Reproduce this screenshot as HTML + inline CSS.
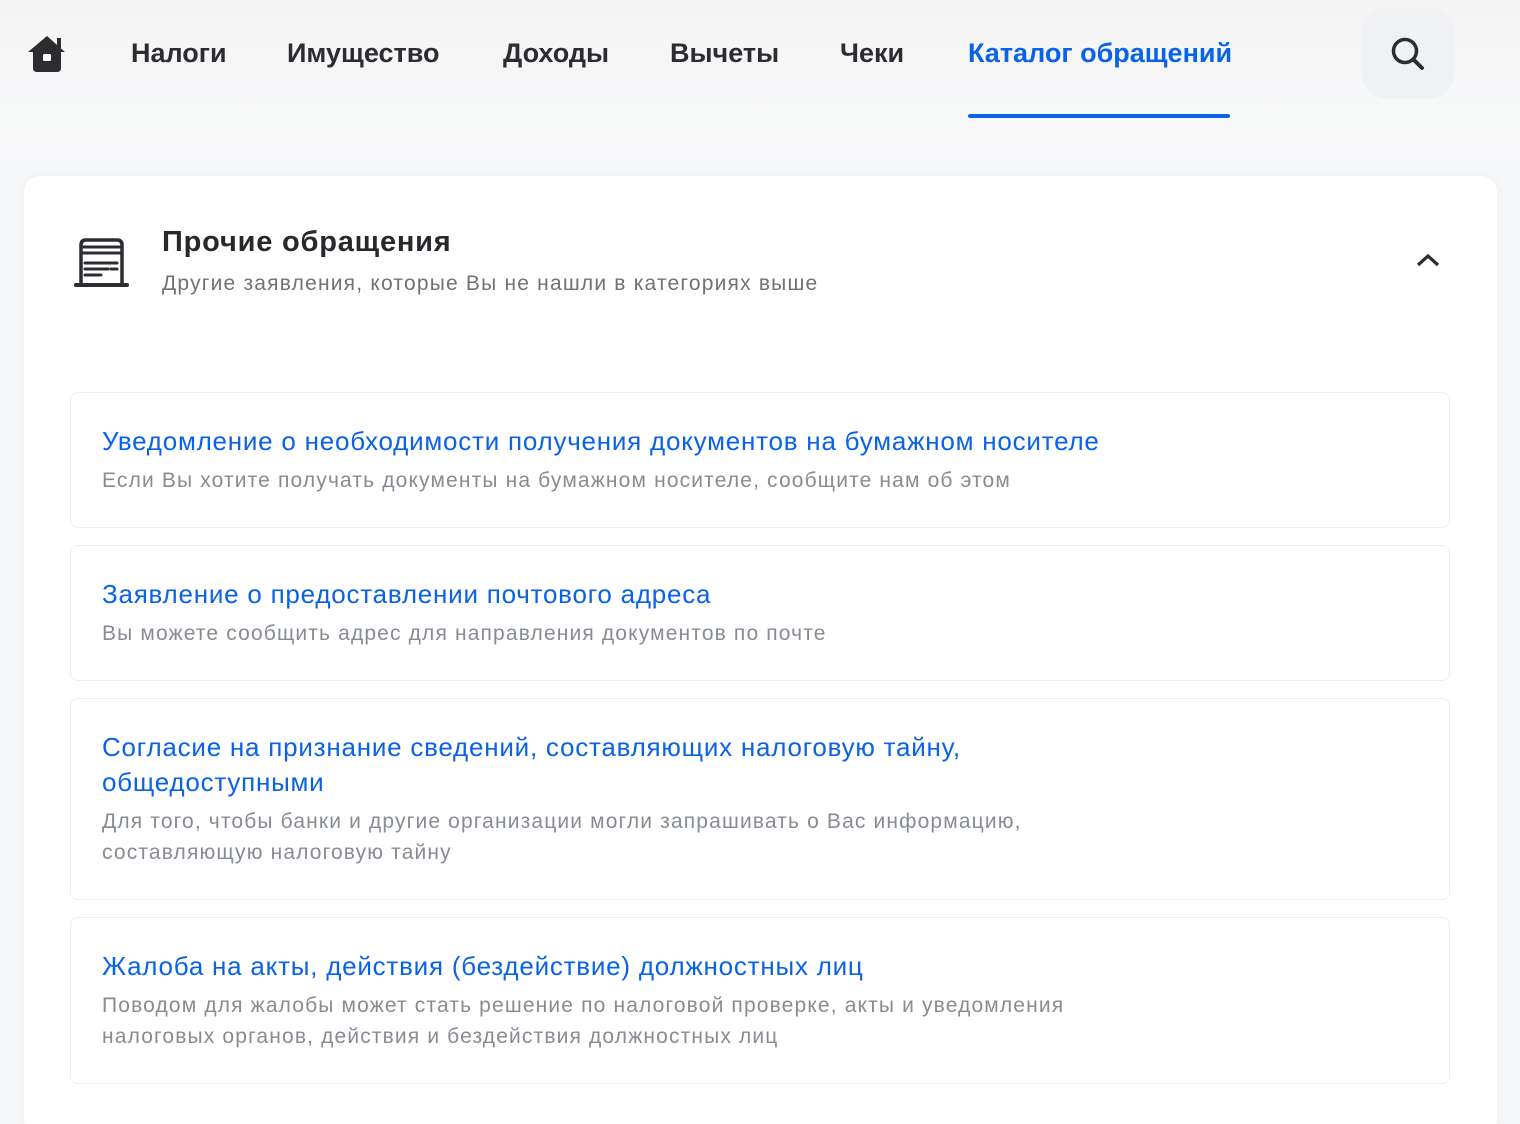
<!DOCTYPE html>
<html style="width:1520px;height:1124px;overflow:hidden"><head><meta charset="utf-8"><style>
*{margin:0;padding:0;box-sizing:border-box}
body{width:1520px;height:1124px;overflow:hidden;background:#f6f7f8;font-family:"Liberation Sans",Arial,sans-serif;position:relative}
.top{position:absolute;left:0;top:0;width:1520px;height:160px;background:linear-gradient(#f4f4f5,#f8f9fa)}
.nav{position:absolute;top:36px;font-size:27px;font-weight:bold;color:#2b2d31;line-height:34px}
.nav.act{color:#0a63e6}
.ul{position:absolute;left:968px;top:114px;width:262px;height:4px;background:#0a63e6;border-radius:2px}
.search{position:absolute;left:1362px;top:7px;width:92px;height:92px;border-radius:26px;background:#f0f1f2}
.card{position:absolute;left:24px;top:176px;width:1473px;height:960px;background:#fff;border-radius:16px;box-shadow:0 0 12px rgba(0,0,0,.04)}
.h{position:absolute;left:162px;top:226px;font-size:29px;font-weight:bold;color:#26282c;letter-spacing:0.8px}
.sub{position:absolute;left:162px;top:272px;font-size:21px;color:#6e7378;letter-spacing:1.2px}
.item{position:absolute;left:70px;width:1380px;border:1.5px solid #eceef1;border-radius:8px;padding:31px 31px}
.t{font-size:26px;color:#0a62e6;line-height:35px;letter-spacing:0.77px}
.d{font-size:21px;color:#878c92;line-height:31px;margin-top:6px;letter-spacing:1.15px}
</style></head><body>
<div class="top"></div>
<svg style="position:absolute;left:27px;top:34px" width="40" height="40" viewBox="0 0 40 40"><path d="M20 2 L38 18 L34 18 L34 34 Q34 38 30 38 L10 38 Q6 38 6 34 L6 18 L1 18 Z" fill="#2b2d31"/><rect x="30" y="4" width="4" height="10" fill="#2b2d31"/><rect x="16" y="20" width="8" height="7" rx="1.5" fill="#fff"/></svg>
<div class="nav" style="left:131px">Налоги</div>
<div class="nav" style="left:287px">Имущество</div>
<div class="nav" style="left:503px">Доходы</div>
<div class="nav" style="left:670px">Вычеты</div>
<div class="nav" style="left:840px">Чеки</div>
<div class="nav act" style="left:968px">Каталог обращений</div>
<div class="ul"></div>
<div class="search"><svg style="position:absolute;left:27px;top:28px" width="38" height="38" viewBox="0 0 38 38"><circle cx="16" cy="16" r="11.5" fill="none" stroke="#2b2d31" stroke-width="3.5"/><path d="M24.5 24.5 L33 33" stroke="#2b2d31" stroke-width="4" stroke-linecap="round"/></svg></div>
<div class="card"></div>
<svg style="position:absolute;left:73px;top:237px" width="56" height="52" viewBox="0 0 56 52"><path d="M8 46 V8 Q8 3 13 3 H44 Q49 3 49 8 V46" fill="none" stroke="#2b2d31" stroke-width="3.5"/><path d="M8 10 H49 M8 16 H49" stroke="#2b2d31" stroke-width="3"/><rect x="1" y="46" width="55" height="4" rx="2" fill="#2b2d31"/><path d="M12 26 H44 M12 32 H35 M38 32 H44 M12 38 H28" stroke="#2b2d31" stroke-width="3" stroke-linecap="round"/></svg>
<div class="h">Прочие обращения</div>
<div class="sub">Другие заявления, которые Вы не нашли в категориях выше</div>
<svg style="position:absolute;left:1415px;top:251px" width="26" height="18" viewBox="0 0 26 18"><path d="M3 14 L13 5 L23 14" fill="none" stroke="#2b2d31" stroke-width="3.2"/></svg>
<div class="item" style="top:392px;height:136px"><div class="t">Уведомление о необходимости получения документов на бумажном носителе</div><div class="d">Если Вы хотите получать документы на бумажном носителе, сообщите нам об этом</div></div>
<div class="item" style="top:545px;height:136px"><div class="t">Заявление о предоставлении почтового адреса</div><div class="d">Вы можете сообщить адрес для направления документов по почте</div></div>
<div class="item" style="top:698px;height:202px"><div class="t">Согласие на признание сведений, составляющих налоговую тайну,<br>общедоступными</div><div class="d">Для того, чтобы банки и другие организации могли запрашивать о Вас информацию,<br>составляющую налоговую тайну</div></div>
<div class="item" style="top:917px;height:167px"><div class="t">Жалоба на акты, действия (бездействие) должностных лиц</div><div class="d">Поводом для жалобы может стать решение по налоговой проверке, акты и уведомления<br>налоговых органов, действия и бездействия должностных лиц</div></div>
</body></html>
